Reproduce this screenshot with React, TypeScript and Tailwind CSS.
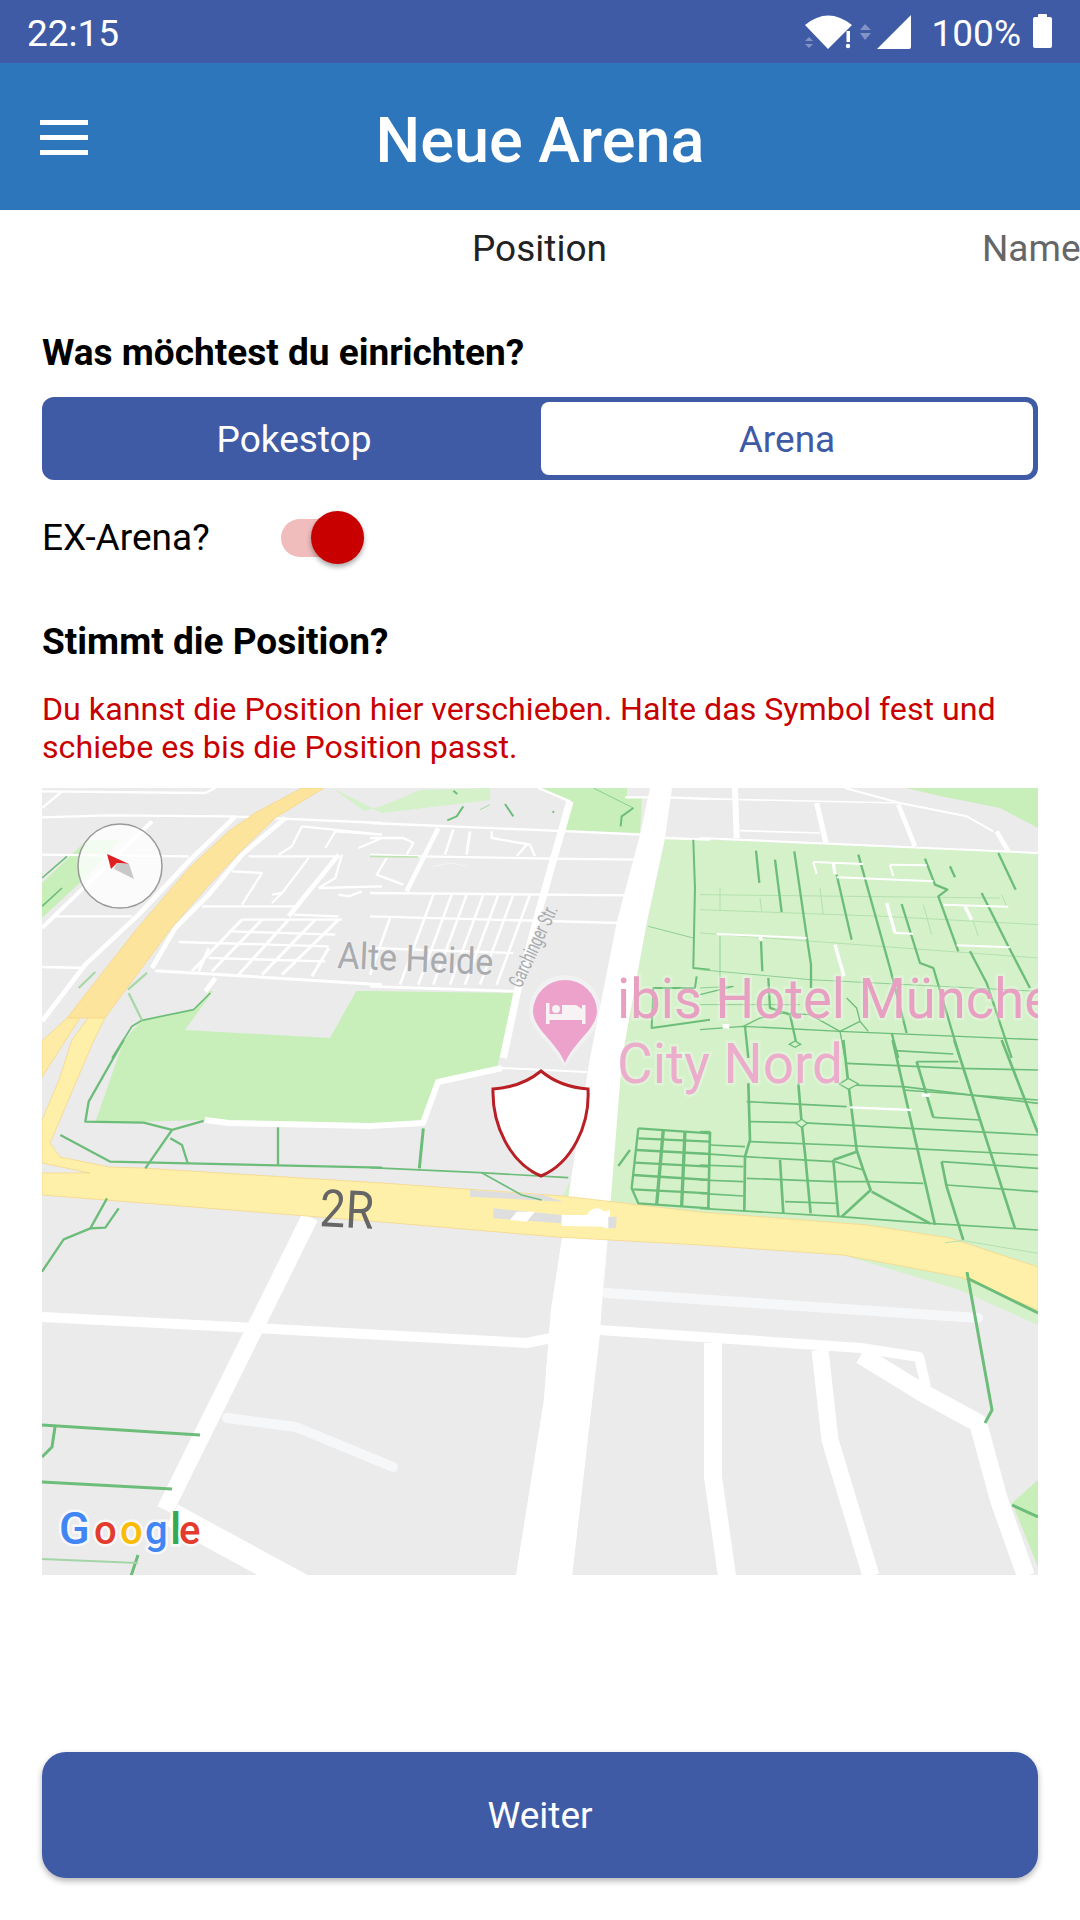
const ROBOTO = "font-['Roboto',sans-serif]"

// map strokes are noted per crop, 3x scale, so each group gets its own origin
function Lines({ items, color, width, cap = 'butt' }: { items: string[]; color: string; width: number; cap?: 'butt' | 'round' }) {
  return (
    <g fill="none" stroke={color} strokeWidth={width} strokeLinejoin="round" strokeLinecap={cap}>
      {items.map((p, i) => (
        <polyline key={i} points={p} />
      ))}
    </g>
  )
}

function Tile({ x, y, children }: { x: number; y: number; children: React.ReactNode }) {
  return <g transform={`translate(${x} ${y}) scale(0.3333)`}>{children}</g>
}

const GREEN = '#6dbd7a'
const WHITE = '#ffffff'
const FAINT = '#b5e0ae'

function MapView() {
  return (
    <svg viewBox="42 788 996 787" className="block w-[996px] h-[787px]">
      <rect x="42" y="788" width="996" height="787" fill="#ebebeb" />

      {/* parks */}
      <polygon points="42,883 87,840 120,840 85,878 42,918" fill="#c8efb9" />
      <polygon points="332,788 364,811 382,806 420,790 490,788 490,800 382,813" fill="#d4f1c9" />
      <polygon points="537,788 572,801 560,830 640,833 642,798 627,798 627,788" fill="#c8efb9" />
      <polygon points="906,788 1038,788 1038,828 1000,808 940,796" fill="#c8efb9" />
      <polygon points="665,838 1038,853 1038,1267 950,1238 867,1225 700,1212 563,1196 610,1100" fill="#d4f1c9" />
      <polygon points="843,1255 960,1277 1038,1310 1038,1325 960,1290" fill="#d4f1c9" />
      <polygon points="210,991 370,991 517,993 497,1067 438,1080 420,1123 370,1125 205,1120 95,1123 124,1040 142,1020 195,1010" fill="#c8efb9" />
      <polygon points="219,983 359,986 330,1038 185,1030" fill="#ebebeb" />
      <polygon points="1038,1480 1012,1503 1038,1567" fill="#c8efb9" />

      {/* roads, top left */}
      <Tile x={42} y={788}>
        <Lines
          color={WHITE}
          width={7}
          items={[
            '0,88 200,82 560,85 1020,105',
            '0,200 440,205',
            '30,385 270,385',
            '0,537 130,540',
            '0,10 490,15 520,0',
            '0,60 60,10',
            '620,205 890,205',
            '600,395 900,395',
            '560,430 880,440',
            '410,462 860,475',
            '500,510 850,520',
            '480,355 760,355',
            '570,250 660,255 600,350',
            '800,210 720,315 690,345',
            '690,320 720,315',
            '780,115 1020,140',
            '780,115 750,175 710,200',
            '850,180 880,130 1020,140',
            '830,300 1020,295',
            '755,380 890,385',
            '950,180 1020,150',
            '900,200 880,270 830,300',
            '890,320 920,325 960,310',
          ]}
        />
        <Lines
          color={WHITE}
          width={9}
          items={[
            '340,548 1020,590',
            '600,395 450,550',
            '660,395 510,550',
            '740,395 590,560',
            '820,395 660,560',
            '890,395 720,560',
            '500,480 470,550',
            '860,480 810,565',
          ]}
        />
        <Lines color={WHITE} width={12} items={['0,420 330,100']} />
        <Lines color={WHITE} width={14} items={['0,700 130,530 290,380 440,220 580,85', '330,540 400,420 500,320 600,200 730,90', '890,200 740,385', '520,570 490,610']} />
      </Tile>

      {/* roads, top middle */}
      <Tile x={370} y={788}>
        <Lines
          color={WHITE}
          width={7}
          items={[
            '0,105 600,130 815,140',
            '0,200 150,205 550,212 800,215',
            '0,315 770,322',
            '0,385 750,405',
            '0,480 430,495',
            '890,28 1020,33',
            '885,150 1020,155',
            '765,28 840,28',
            '365,130 365,150 480,170 495,205',
            '440,205 470,170',
            '0,150 100,150 130,165 110,200',
            '50,210 20,260 100,290',
            '505,0 600,40',
          ]}
        />
        <Lines color={WHITE} width={8} items={['190,320 90,590', '245,320 145,590', '290,320 190,590', '340,320 240,590', '385,320 285,590', '430,320 330,590', '480,320 380,590', '60,390 0,560']} />
        <Lines color={WHITE} width={8} items={['0,595 440,610', '250,125 225,200', '300,130 290,200']} />
        <Lines color="#f4f4f4" width={3} items={['190,235 245,225 290,235']} />
        <Lines color={WHITE} width={14} items={['205,120 110,310']} />
        <Lines color={WHITE} width={22} items={['600,40 515,340 440,620 400,810']} />
        <Lines color="#bfe3b0" width={5} items={['0,205 145,207']} />
      </Tile>

      {/* roads, top right */}
      <Tile x={700} y={788}>
        <Lines color={WHITE} width={5} items={['0,32 600,45', '120,128 360,135']} />
        <Lines color={WHITE} width={6} items={['435,0 600,45 800,85 880,130', '0,150 1014,195']} />
        <Lines color={WHITE} width={18} items={['105,0 110,150']} />
        <Lines color={WHITE} width={16} items={['350,45 378,165']} />
        <Lines color={WHITE} width={14} items={['595,50 645,175', '890,130 925,190']} />
      </Tile>

      {/* road round the park */}
      <polyline points="502,1068 438,1082 423,1123 370,1126 229,1123 205,1120" fill="none" stroke="#fff" strokeWidth="6" strokeLinejoin="round" />
      <polyline points="502,1068 587,1072" fill="none" stroke="#fff" strokeWidth="2" />

      {/* roads, bottom */}
      <Lines color={WHITE} width={17} items={['310,1217 165,1510']} />
      <Lines color={WHITE} width={24} items={['172,1515 310,1590']} />
      <Lines color={WHITE} width={10} items={['42,1317 255,1328 527,1343 551,1338', '599,1330 861,1348 919,1357 926,1387']} />
      <Lines color={WHITE} width={18} items={['713,1343 713,1477 727,1576', '861,1355 923,1393 978,1423 999,1500 1026,1576']} />
      <Lines color={WHITE} width={17} items={['820,1350 830,1440 871,1576']} />
      <Lines color="#f6f7f9" width={10} cap="round" items={['227,1418 296,1427 393,1467', '606,1293 978,1318']} />

      {/* main road */}
      <polygon points="650,788 672,788 665,838 647,921 622,1058 602,1310 609,1200 600,1333 572,1576 516,1576 544,1400 551,1310 590,1058 617,921 640,835" fill="#fff" />
      <polygon points="590,1058 620,1058 604,1240 599,1340 572,1576 516,1576 544,1400 551,1310" fill="#fff" />

      {/* highway */}
      <polygon
        points="302,788 324,788 275,818 242,850 209,885 169,931 105,1018 67,1018 135,931 189,868 229,831 255,813"
        fill="#fde49c"
        stroke="#f5d789"
        strokeWidth="0.8"
      />
      <polygon points="67,1018 80,1018 42,1077 42,1041" fill="#feeba6" stroke="#f5d789" strokeWidth="0.8" />
      <polygon
        points="88,1018 105,1018 94,1040 50,1143 60,1157 109,1167 142,1168 382,1183 563,1196 700,1212 867,1225 950,1238 1038,1267 1038,1310 960,1277 843,1255 700,1245 557,1237 382,1222 42,1195 42,1173 90,1173 42,1163 42,1120 59,1080 72,1040"
        fill="#fff0a9"
        stroke="#f5d789"
        strokeWidth="0.8"
      />

      {/* underpass */}
      <Tile x={370} y={1040}>
        <polygon points="300,450 520,465 580,485 300,470" fill="#dedede" />
        <polygon points="370,505 575,525 575,550 370,535" fill="#dedede" />
        <polygon points="440,515 495,515 470,545 420,540" fill="#fff" />
        <polygon points="575,525 650,525 720,510 720,565 575,560" fill="#fff" />
        <polygon points="715,530 740,530 738,565 715,565" fill="#dedede" />
        <circle cx="680" cy="535" r="30" fill="#fff" />
        <Lines color="#fff0a9" width={30} cap="round" items={['560,572 695,575']} />
      </Tile>

      {/* footpaths */}
      <Tile x={42} y={788}>
        <Lines color={GREEN} width={5} items={['0,355 60,300', '0,270 75,205', '300,697 455,665 505,615', '300,697 270,715 210,810']} />
        <Lines color="#a9d8a8" width={7} items={['260,615 300,697', '110,600 160,552', '258,605 315,555']} />
      </Tile>
      <Tile x={370} y={788}>
        <Lines color={GREEN} width={6} items={['280,55 260,85 232,97', '405,48 430,85', '250,8 262,18', '790,60 755,85 752,115', '970,155 975,300 970,540 1020,545', '980,565 975,600 850,600 845,720 1020,695', '548,70 552,74']} />
        <Lines color={GREEN} width={2} items={['670,0 790,60', '835,415 970,450']} />
        <Lines color="#a9d8a8" width={3} items={['330,65 360,50']} />
      </Tile>
      <Tile x={700} y={788}>
        <Lines color={FAINT} width={3} items={['0,320 900,330', '0,365 550,385 1014,410', '0,435 1014,510', '60,300 60,370', '180,330 185,370', '360,300 370,380', '670,350 695,440', '820,400 835,445', '905,320 920,355']} />
        <Lines color="#8fcf95" width={3} items={['0,545 330,575 1014,610', '0,650 300,650', '0,600 100,595', '60,445 60,640']} />
        <Lines
          color={GREEN}
          width={7}
          items={[
            '168,188 178,285',
            '225,215 245,372',
            '283,190 320,445 333,530 333,600',
            '410,260 455,455',
            '475,200 570,540 620,735',
            '675,212 705,290 742,305 715,325 775,490',
            '750,235 765,268',
            '810,490 860,585 935,810',
            '845,315 925,475 990,600',
            '895,195 947,305',
            '605,348 660,525 700,540 780,810',
            '183,460 187,550',
            '205,570 210,660 270,680 290,770',
            '135,715 145,810',
            '575,735 595,810',
          ]}
        />
        <Lines color={GREEN} width={4} items={['130,715 180,690 250,675 330,680 420,730 480,700', '420,730 435,810', '440,630 470,660 480,700 505,730', '0,725 130,715 420,730 1014,755', '0,620 100,595']} />
        <Lines color="#fff" width={14} items={['68,715 88,715']} />
        <Lines color={WHITE} width={6} items={['340,222 350,258', '340,222 490,228', '570,230 580,265', '570,230 680,232', '410,268 700,280', '585,435 640,437', '730,350 925,356', '50,438 320,450', '770,472 930,478']} />
        <Lines color={WHITE} width={10} items={['400,225 405,258', '560,345 585,435', '795,355 815,395', '180,445 185,458', '405,470 432,565']} />
      </Tile>
      <Tile x={700} y={1040}>
        <Lines
          color={GREEN}
          width={8}
          items={[
            '145,130 150,300 135,350 133,515',
            '295,130 305,250 315,340 332,520',
            '430,0 445,130 470,330 490,390 512,450 425,530',
            '578,0 630,230 705,555',
            '763,0 945,565',
            '905,0 1014,280',
            '650,65 700,232',
            '725,365 740,440 790,600',
            '30,275 25,505',
            '240,360 250,520',
            '400,360 415,530',
            '515,455 690,550',
            '400,360 470,335',
          ]}
        />
        <Lines
          color={GREEN}
          width={5}
          items={[
            '140,185 440,200',
            '150,245 300,248 630,265 1014,285',
            '150,305 410,315 620,325 1014,345',
            '30,315 135,320',
            '0,340 135,350 400,365',
            '0,375 130,380',
            '0,420 130,425',
            '140,415 400,425 510,425 670,430',
            '0,460 130,468',
            '255,485 415,490',
            '0,505 420,530 690,550 1014,570',
            '440,70 780,85 1014,90',
            '445,135 610,140 1014,190',
            '610,150 1014,180',
            '585,32 760,42',
            '650,65 775,65',
            '700,232 840,240',
            '725,365 1014,385',
            '740,435 1014,455',
            '405,365 490,390',
            '0,275 30,275',
          ]}
        />
        <g fill="#d4f1c9" stroke={GREEN} strokeWidth="4">
          <polygon points="445,115 475,132 445,148 418,132" />
          <polygon points="305,238 322,250 305,262 288,250" />
          <polygon points="285,3 302,13 285,22 268,13" />
        </g>
        <Lines color="#fff" width={7} items={['450,202 635,210']} />
        <Lines color="#fff" width={10} items={['665,165 690,166']} />
        <Lines color={FAINT} width={3} items={['735,608 790,602 1014,640']} />
      </Tile>
      <Tile x={42} y={1040}>
        <Lines color={GREEN} width={7} items={['245,0 140,185 130,245 305,248 390,270 485,243', '390,270 310,385', '385,295 420,315 438,372', '55,285 205,365 1020,383', '708,262 708,378', '0,695 65,598 145,565 195,475', '145,565 190,563 230,505']} />
      </Tile>
      <Tile x={370} y={1040}>
        <Lines color={GREEN} width={5} items={['0,383 330,398 595,413', '335,398 455,465 515,480']} />
        <Lines color={GREEN} width={9} items={['160,265 148,385']} />
        <Lines color={GREEN} width={7} items={['745,378 780,330', '805,265 785,445 805,490 1020,505', '805,265 1020,280', '805,295 1020,305', '800,330 1020,342', '795,368 1020,380', '790,405 1020,420', '790,448 1020,460']} />
        <Lines color={GREEN} width={10} items={['880,270 860,495', '945,275 935,500']} />
      </Tile>
      <Lines
        color={GREEN}
        width={3}
        items={['967,1272 992,1410 985,1423', '967,1278 1038,1313', '42,1425 200,1435', '55,1427 52,1447 42,1457', '42,1482 172,1489', '138,1555 131,1576', '1012,1505 1038,1517']}
      />
      <Lines color="#a4d4a7" width={2} items={['42,1559 138,1563']} />

      {/* labels */}
      <g fontFamily="Roboto">
        <text x="337" y="968" fontSize="37" fill="#a9abae" textLength="156" lengthAdjust="spacingAndGlyphs" transform="rotate(2.5 337 968)" stroke="#f2f2f2" strokeOpacity="0.5" strokeWidth="3" paintOrder="stroke">
          Alte Heide
        </text>
        <text x="0" y="0" fontSize="21" fill="#a9abae" textLength="88" lengthAdjust="spacingAndGlyphs" transform="translate(521 989) rotate(-65)" stroke="#f2f2f2" strokeOpacity="0.6" strokeWidth="2" paintOrder="stroke">
          Garchinger Str.
        </text>
        <text x="319" y="1226" fontSize="52" fill="#666666" textLength="54" lengthAdjust="spacingAndGlyphs" transform="rotate(3 319 1226)">
          2R
        </text>
        <text x="617" y="1018" fontSize="56" fill="#e8a0c2" textLength="466" lengthAdjust="spacingAndGlyphs" stroke="#ffffff" strokeOpacity="0.25" strokeWidth="5" paintOrder="stroke">
          ibis Hotel München
        </text>
        <text x="617" y="1083" fontSize="56" fill="#ecaccb" textLength="226" lengthAdjust="spacingAndGlyphs" stroke="#ffffff" strokeOpacity="0.25" strokeWidth="5" paintOrder="stroke">
          City Nord
        </text>
      </g>

      {/* hotel pin */}
      <path d="M565 975 a36 36 0 0 1 36 36 c0 20 -24 34 -36 56 c-12 -22 -36 -36 -36 -56 a36 36 0 0 1 36 -36z" fill="#fff" fillOpacity="0.3" />
      <path d="M565 980 a32 32 0 0 1 32 31 c0 18 -23 30 -32 52 c-9 -22 -32 -34 -32 -52 a32 32 0 0 1 32 -31z" fill="#eda2cc" />
      <g fill="#f7f3f5">
        <rect x="546" y="1003" width="3.5" height="21" />
        <rect x="582" y="1005" width="3.5" height="19" />
        <rect x="546" y="1014" width="39" height="6" />
        <circle cx="556" cy="1009" r="4" />
        <path d="M562 1005 h14 l6 4 v6 h-20z" />
      </g>

      {/* compass */}
      <circle cx="120" cy="866" r="42" fill="#ffffff" fillOpacity="0.78" stroke="#9a9a9a" strokeWidth="1.5" />
      <polygon points="107,854 129,864 117,863 111,869" fill="#e02020" />
      <polygon points="129,864 134,879 114,869 117,863" fill="#c8c8c8" />

      {/* draggable shield */}
      <path
        d="M541 1071 Q560 1087 588 1089 C590 1125 572 1163 541 1176 C510 1163 492 1125 493 1089 Q522 1087 541 1071Z"
        fill="#ffffff"
        stroke="#b92025"
        strokeWidth="3"
      />

      {/* Google logo */}
      <g fontFamily="Roboto" fontSize="40" fontWeight="500" stroke="#ffffff" strokeOpacity="0.7" strokeWidth="5" paintOrder="stroke">
        <text x="59" y="1544" fontSize="45" fill="#4285f4">G</text>
        <text x="94" y="1544" fill="#e33b2e">o</text>
        <text x="120" y="1544" fill="#fbbc05">o</text>
        <text x="145" y="1544" fill="#4285f4">g</text>
        <text x="170" y="1544" fontSize="44" fill="#34a853">l</text>
        <text x="179" y="1544" fill="#e33b2e">e</text>
      </g>
    </svg>
  )
}

function StatusIcons() {
  return (
    <svg viewBox="800 10 280 44" className="w-[280px] h-[44px]">
      <path d="M805 25 Q828 6 852 25 L828 49 Z" fill="#fff" />
      <rect x="846.5" y="31" width="3.5" height="11" fill="#fff" />
      <circle cx="848" cy="46" r="2.2" fill="#fff" />
      <path d="M805 41 L809 37 L813 41 Z M805 44 L813 44 L809 48 Z M860 30 L865 24 L871 30 Z M860 33 L871 33 L865 40 Z" fill="#fff" fillOpacity="0.35" />
      <path d="M877 49 L911 15 V47 a2 2 0 0 1 -2 2 Z" fill="#fff" />
      <path d="M1038 17 V15 a1 1 0 0 1 1 -1 h7 a1 1 0 0 1 1 1 v2 h3 a2 2 0 0 1 2 2 V46 a2 2 0 0 1 -2 2 h-15 a2 2 0 0 1 -2 -2 V19 a2 2 0 0 1 2 -2z" fill="#fff" />
    </svg>
  )
}

export default function App() {
  return (
    <div className={`w-[1080px] h-[1920px] bg-white flex flex-col overflow-hidden ${ROBOTO}`}>
      <div className="relative h-[63px] bg-[#3f5ba6] flex items-center justify-between pl-[27px] text-white text-[37px] leading-none">
        <span className="pt-[3px]">22:15</span>
        <span className="absolute right-[59px] top-[15px]">100%</span>
        <StatusIcons />
      </div>

      <div className="relative h-[147px] pt-[8px] bg-[#2d76bc] flex items-center justify-center text-white">
        <div className="absolute left-[40px] top-[57px] w-[48px] flex flex-col gap-[10px]">
          <div className="h-[5px] bg-white" />
          <div className="h-[5px] bg-white" />
          <div className="h-[5px] bg-white" />
        </div>
        <h1 className="text-[63px] font-medium leading-none">Neue Arena</h1>
      </div>

      <div className="h-[76px] pt-[2px] flex items-center pl-[472px] gap-[375px] whitespace-nowrap overflow-hidden text-[37px]">
        <span className="text-[#222222]">Position</span>
        <span className="text-[#666666]">Name</span>
      </div>

      <div className="px-[42px] flex flex-col">
        <h2 className="mt-[45px] text-[37px] leading-[44px] font-bold text-black">Was möchtest du einrichten?</h2>

        <div className="mt-[22px] h-[83px] rounded-[12px] bg-[#3f5ba6] p-[5px] flex text-[37px]">
          <div className="flex-1 pt-[2px] flex items-center justify-center text-white">Pokestop</div>
          <div className="w-[492px] pt-[2px] rounded-[8px] bg-white flex items-center justify-center text-[#3f5ba6]">Arena</div>
        </div>

        <div className="mt-[26px] h-[64px] flex items-center text-[37px] text-black">
          <span className="w-[239px]">EX-Arena?</span>
          <div className="relative w-[83px] h-[38px] rounded-full bg-[#f0bcbc]">
            <div className="absolute right-0 top-[-8px] w-[53px] h-[53px] rounded-full bg-[#c80000] shadow-[0_3px_5px_rgba(0,0,0,0.35)]" />
          </div>
        </div>

        <h2 className="mt-[50px] text-[37px] leading-[44px] font-bold text-black">Stimmt die Position?</h2>

        <p className="mt-[26px] text-[32.2px] leading-[38px] text-[#c80000]">
          Du kannst die Position hier verschieben. Halte das Symbol fest und schiebe es bis die Position passt.
        </p>

        <div className="mt-[22px]">
          <MapView />
        </div>

        <button className="mt-[177px] h-[126px] pt-[2px] rounded-[24px] bg-[#3f5ba6] text-white text-[37px] shadow-[0_3px_6px_rgba(0,0,0,0.3)]">
          Weiter
        </button>
      </div>
    </div>
  )
}
